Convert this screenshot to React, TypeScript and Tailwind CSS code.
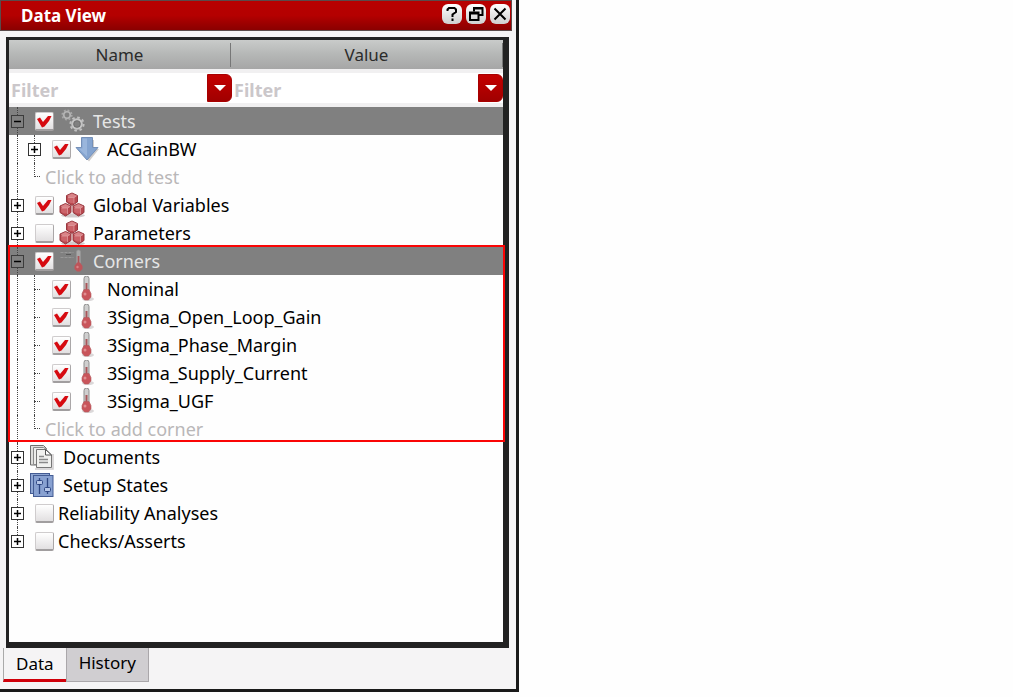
import { useState } from "react";
import type { ReactNode } from "react";

type Expand = "open" | "closed";

function Gears() {
  return (
    <svg width="26" height="26" viewBox="0 0 26 26" fill="none" aria-hidden="true">
      <circle cx="8" cy="7" r="3.300" stroke="#b4b4b4" strokeWidth="1.800" />
      <circle cx="8" cy="7" r="4.800" stroke="#a9a9a9" strokeWidth="1.600" strokeDasharray="1.885 1.885" />
      <circle cx="18" cy="16" r="4.700" stroke="#c4c4c4" strokeWidth="2.200" />
      <circle cx="18" cy="16" r="6.600" stroke="#c0c0c0" strokeWidth="2" strokeDasharray="2.590 2.590" />
      <circle cx="18" cy="16" r="3.300" stroke="#6a6a6a" strokeWidth="0.800" />
    </svg>
  );
}

function DownArrow() {
  return (
    <svg width="24" height="26" viewBox="0 0 24 26" aria-hidden="true">
      <path d="M8 4h11v9h5L14 25.500 4 14h4z" fill="#cfcdcc" />
      <path d="M6.500 1.500h11v10h5.500L12 24 1 11.500h5.500z" fill="#84a4d0" stroke="#7590b8" strokeWidth="1" />
      <path d="M7.500 2.500h4.500v18L3.500 12.500h4z" fill="#9ab6dc" />
    </svg>
  );
}

function Cube({ x, y }: { x: number; y: number }) {
  return (
    <g transform={`translate(${x} ${y})`}>
      <path
        d="M6.500.5L12 3v6.500l-5.500 3.500L1 9.500V3z"
        fill="#b9484f"
        stroke="#97383f"
        strokeWidth="1"
        strokeLinejoin="round"
      />
      <path d="M6.500 1l4.800 2.200-3 2.200H4L1.800 3.200z" fill="#d98488" />
      <path d="M2.200 5h6.300v5.500H5L2.200 9z" fill="#cb6369" />
      <path d="M2.500 5h6M8.500 5v6M8.500 5l2.500-1.500" stroke="#e3a2a5" strokeWidth="0.700" fill="none" />
    </g>
  );
}

function Cubes() {
  return (
    <svg width="26" height="26" viewBox="0 0 26 26" aria-hidden="true">
      <ellipse cx="14" cy="23.500" rx="12" ry="2" fill="#d2cccd" />
      <Cube x={6.500} y={0.500} />
      <Cube x={0} y={11} />
      <Cube x={13} y={11} />
    </svg>
  );
}

function Thermo() {
  return (
    <svg width="24" height="26" viewBox="0 0 24 26" aria-hidden="true">
      <ellipse cx="13" cy="23" rx="6" ry="2" fill="#dbd8d9" />
      <path d="M9 2.500a2.500 2.500 0 0 1 5 0V15H9z" fill="#cfcfcf" stroke="#8d8d8d" strokeWidth="1" />
      <path d="M10.500 7h2v9h-2z" fill="#a9565a" />
      <path d="M9 13.500h5l2 4v3.500l-2.500 3h-4L7 21v-3.500z" fill="#c9555b" stroke="#b25a5e" strokeWidth="0.600" />
      <circle cx="10" cy="18" r="1.500" fill="#e08f92" />
    </svg>
  );
}

function CornersIcon() {
  return (
    <svg width="26" height="26" viewBox="0 0 26 26" aria-hidden="true">
      <path d="M1.500 4.500h13M1.500 9.500h13" stroke="#989898" strokeWidth="1" strokeDasharray="3 1" />
      <path d="M7 6.500h5" stroke="#585858" strokeWidth="1" />
      <path d="M17.500 4a2 2 0 0 1 4 0v12h-4z" fill="#a9a9a9" stroke="#969696" strokeWidth="0.800" />
      <path d="M18.600 8h1.800v9h-1.800z" fill="#a9565a" />
      <path d="M18 14.500h3l2.500 3.500v3L21 23.500h-3L15.500 21v-3z" fill="#bd555a" />
      <circle cx="18.500" cy="19" r="1.200" fill="#d98487" />
    </svg>
  );
}

function DocumentsIcon() {
  return (
    <svg width="26" height="26" viewBox="0 0 26 26" aria-hidden="true">
      <path d="M6 25h18V10" stroke="#cfcdce" strokeWidth="1.500" fill="none" />
      <path d="M1.500 1.500h13l3 3v16.500h-16z" fill="#dededc" stroke="#6e6e6e" />
      <path d="M4.500 3.500h10l3 2v15h-13z" fill="#ececea" stroke="#8a8a8a" />
      <path d="M7.500 5.500h9.500l5.500 5.500v12.500h-15z" fill="#f1f1ef" stroke="#777" />
      <path d="M16.500 5.500v5.500h6z" fill="#fff" stroke="#555" />
      <path d="M10 12.500h5M10 15.500h9M10 18.500h9" stroke="#8a8a8a" strokeWidth="1.300" />
    </svg>
  );
}

function SetupIcon() {
  return (
    <svg width="26" height="26" viewBox="0 0 26 26" aria-hidden="true">
      <rect x="1.500" y="1.500" width="19" height="20" fill="#8ea6d3" stroke="#435b93" />
      <rect x="4.500" y="3.500" width="19.500" height="21" fill="#88a1d1" stroke="#435b93" />
      <path d="M10.500 6v16M18.500 6v16" stroke="#2f4783" strokeWidth="1.300" />
      <rect x="7.500" y="8.500" width="6" height="4" rx="1" fill="#b5c6e8" stroke="#2f4783" />
      <rect x="15.500" y="15.500" width="6" height="4" rx="1" fill="#b5c6e8" stroke="#2f4783" />
    </svg>
  );
}

function Check({ label, initial }: { label: string; initial: boolean }) {
  const [on, setOn] = useState(initial);
  return (
    <span className="grid size-5 shrink-0 place-items-center">
      <input
        type="checkbox"
        aria-label={label}
        checked={on}
        onChange={() => setOn(!on)}
        className="col-start-1 row-start-1 size-[19px] appearance-none rounded-xs border border-[#cfcccd] border-r-[#aaa7a8] border-b-2 border-b-[#a19e9f] bg-linear-to-b from-white to-[#e2e0e1]"
      />
      {on && (
        <svg
          className="pointer-events-none col-start-1 row-start-1"
          width="20"
          height="20"
          viewBox="0 0 20 20"
          aria-hidden="true"
        >
          <path d="M3 8l3-1.500 3 4.500 5-6h3.500L15 10l-4.500 5.500L8 16.500z" fill="#d60a10" />
        </svg>
      )}
    </span>
  );
}

function Expander({ state, label }: { state: Expand; label: string }) {
  return (
    <button
      type="button"
      aria-label={(state === "open" ? "Collapse " : "Expand ") + label}
      className={
        state === "open"
          ? "relative size-[13px] border border-[#3c3c3c] bg-[#808080]"
          : "relative size-[13px] border border-[#333] bg-white"
      }
    >
      <svg className="block" width="11" height="11" viewBox="0 0 11 11" aria-hidden="true">
        <path d={state === "open" ? "M2 5.500h7" : "M2 5.500h7M5.500 2v7"} stroke="#000" strokeWidth="1.500" />
      </svg>
    </button>
  );
}

function Line({ half }: { half?: boolean }) {
  return (
    <span
      className={
        half
          ? "absolute top-0 left-2 h-1/2 w-1.5 border-b border-l border-dotted border-[#444]"
          : "absolute inset-y-0 left-2 border-l border-dotted border-[#444]"
      }
    />
  );
}

function Gutter({ children }: { children?: ReactNode }) {
  return <span className="relative flex h-full w-[17px] shrink-0 items-center justify-center">{children}</span>;
}

interface RootProps {
  label: string;
  state: Expand;
  checked?: boolean;
  icon?: ReactNode;
  last?: boolean;
}

function RootRow({ label, state, checked, icon, last }: RootProps) {
  const open = state === "open";
  return (
    <div
      role="row"
      className={
        open ? "flex h-7 items-center bg-[#808080] text-[#e6e6e6]" : "flex h-7 items-center text-black"
      }
    >
      <Gutter>
        <Line half={last} />
        <Expander state={state} label={label} />
      </Gutter>
      {checked !== undefined && (
        <span className="flex pl-2">
          <Check label={label} initial={checked} />
        </span>
      )}
      {icon && <span className={checked === undefined ? "pl-[3px]" : "pl-[5px]"}>{icon}</span>}
      <span role="gridcell" className={icon ? "pl-2 whitespace-nowrap" : "pl-1 whitespace-nowrap"}>
        {label}
      </span>
    </div>
  );
}

function ChildRow({ label, icon, expandable }: { label: string; icon: ReactNode; expandable?: boolean }) {
  return (
    <div role="row" className="flex h-7 items-center text-black">
      <Gutter>
        <Line />
      </Gutter>
      <Gutter>
        <Line />
        {expandable ? (
          <Expander state="closed" label={label} />
        ) : (
          <span className="absolute left-2 w-1.5 border-b border-dotted border-[#444]" />
        )}
      </Gutter>
      <span className="flex pr-1 pl-2">
        <Check label={label} initial />
      </span>
      {icon}
      <span role="gridcell" className="pl-2 whitespace-nowrap">
        {label}
      </span>
    </div>
  );
}

function AddRow({ label }: { label: string }) {
  return (
    <div role="row" className="flex h-7 items-center">
      <Gutter>
        <Line />
      </Gutter>
      <Gutter>
        <Line half />
      </Gutter>
      <button type="button" className="pl-0.5 whitespace-nowrap text-[#b9b7b8]">
        {label}
      </button>
    </div>
  );
}

function FilterCell({ column }: { column: string }) {
  return (
    <div className="flex h-[30px] min-w-0 items-center bg-white">
      <input
        type="text"
        aria-label={"Filter " + column}
        placeholder="Filter"
        className="h-full min-w-0 flex-1 bg-transparent pt-1 pl-0.5 font-bold outline-none placeholder:text-[#cbc7ca]"
      />
      <button
        type="button"
        aria-label={column + " filter options"}
        className="flex h-7 w-[25px] shrink-0 items-center justify-center rounded-r-md border border-[#a80000] bg-linear-to-b from-[#c40000] to-[#a00000]"
      >
        <svg width="12" height="6" viewBox="0 0 12 6" aria-hidden="true">
          <path d="M0 0h12L6 6z" fill="#fff" />
        </svg>
      </button>
    </div>
  );
}

function TitleButton({ label, children }: { label: string; children: ReactNode }) {
  return (
    <button
      type="button"
      aria-label={label}
      className="flex size-5 items-center justify-center rounded-md bg-linear-to-b from-white to-[#cfcfcf]"
    >
      <svg width="16" height="16" viewBox="0 0 16 16" fill="none" stroke="#000" strokeWidth="2" aria-hidden="true">
        {children}
      </svg>
    </button>
  );
}

export default function App() {
  return (
    <div className="flex min-h-screen bg-[#fefefe] pb-[5px] font-['Noto_Sans',sans-serif] text-[17px] leading-6">
      <main className="flex w-[519px] max-w-full flex-col border-r-[3px] border-b-[3px] border-[#1a1a1a] bg-[#f5f4f5]">
        <header className="mr-1 flex h-[31px] items-center justify-between border border-[#5a4a4a] bg-linear-to-b from-[#b80000] via-[#b40000] to-[#8a0000] pr-px pl-5">
          <h1 className="font-bold text-white">Data View</h1>
          <div className="flex gap-1 pb-1">
            <TitleButton label="Help">
              <path d="M3.500 5V3.500L5 2h5.500L12 3.500V6L8.500 8.500V11M8.500 12.500v2.500" />
            </TitleButton>
            <TitleButton label="Float">
              <path d="M6 5.500V2h8.500v7H11M6 2.500h8.500" />
              <path d="M2 6.500h8.500V14H2zM2 7.500h8.500" />
            </TitleButton>
            <TitleButton label="Close">
              <path d="M2.500 2.500l11 11M13.500 2.500l-11 11" />
            </TitleButton>
          </div>
        </header>

        <section
          role="treegrid"
          aria-label="Data View"
          className="mt-1.5 mr-[7px] ml-1.5 flex-1 border-[3px] border-r-[6px] border-b-[6px] border-[#222] bg-[#fefefe] text-lg leading-6"
        >
          <div
            role="row"
            className="grid h-[29px] grid-cols-[222fr_272fr] items-center bg-linear-to-b from-[#c9cbca] via-[#b5b7b6] to-[#a6a6a6] text-center text-[17px] text-[#2b2b2b]"
          >
            <span role="columnheader" className="border-r border-[#777]">
              Name
            </span>
            <span role="columnheader" className="border-r border-[#777]">
              Value
            </span>
          </div>
          <div className="grid grid-cols-[223fr_271fr] border-t-4 border-b-4 border-[#f1f0f1]">
            <FilterCell column="Name" />
            <FilterCell column="Value" />
          </div>

          <RootRow label="Tests" state="open" checked icon={<Gears />} />
          <ChildRow label="ACGainBW" icon={<DownArrow />} expandable />
          <AddRow label="Click to add test" />
          <RootRow label="Global Variables" state="closed" checked icon={<Cubes />} />
          <RootRow label="Parameters" state="closed" checked={false} icon={<Cubes />} />

          <div role="rowgroup" className="relative">
            <RootRow label="Corners" state="open" checked icon={<CornersIcon />} />
            <ChildRow label="Nominal" icon={<Thermo />} />
            <ChildRow label="3Sigma_Open_Loop_Gain" icon={<Thermo />} />
            <ChildRow label="3Sigma_Phase_Margin" icon={<Thermo />} />
            <ChildRow label="3Sigma_Supply_Current" icon={<Thermo />} />
            <ChildRow label="3Sigma_UGF" icon={<Thermo />} />
            <AddRow label="Click to add corner" />
            <span className="pointer-events-none absolute -top-0.5 -right-0.5 bottom-px -left-px border-2 border-[#fa0505]" />
          </div>

          <RootRow label="Documents" state="closed" icon={<DocumentsIcon />} />
          <RootRow label="Setup States" state="closed" icon={<SetupIcon />} />
          <RootRow label="Reliability Analyses" state="closed" checked={false} />
          <RootRow label="Checks/Asserts" state="closed" checked={false} last />
        </section>

        <div role="tablist" className="flex pb-[7px] pl-[3px]">
          <button
            type="button"
            role="tab"
            aria-selected="true"
            className="h-[34px] border-b-[3px] border-l border-[#d0000a] border-l-[#aaa] px-3"
          >
            Data
          </button>
          <button
            type="button"
            role="tab"
            aria-selected="false"
            className="h-[34px] border border-t-0 border-[#aaa7aa] bg-[#d0ced1] px-3 pb-1"
          >
            History
          </button>
        </div>
      </main>
    </div>
  );
}
